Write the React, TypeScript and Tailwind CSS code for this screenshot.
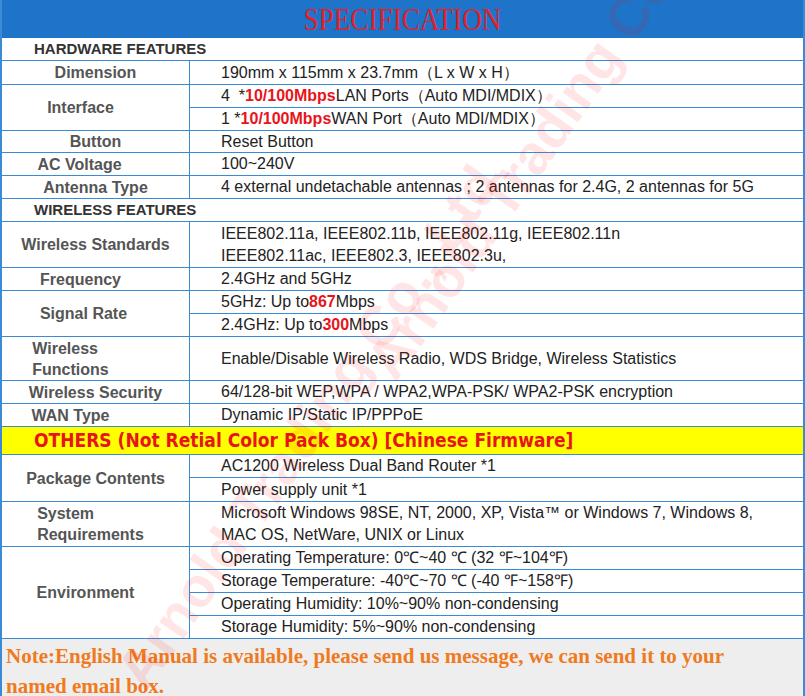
import React from "react";

const B = "border-[#3b8ad6]";
const R = ({ children }: { children: React.ReactNode }) => <span className="text-[#e8141b] font-bold">{children}</span>;

function Row({ label, lines, h, dividers = true }: { label: React.ReactNode; lines: React.ReactNode[]; h: number[]; dividers?: boolean }) {
  return (
    <div className={`flex border-b ${B}`}>
      <div className={`w-[188px] shrink-0 border-r ${B} flex items-center justify-center text-[16px] font-bold text-[#555] leading-[21px]`}>{label}</div>
      <div className="flex-1 flex flex-col">
        {lines.map((l, i) => (
          <div key={i} style={{ height: i === lines.length - 1 ? h[i] - 1 : h[i] }} className={`flex items-center pl-[31px] text-[16px] text-[#222] whitespace-nowrap ${dividers && i < lines.length - 1 ? `border-b ${B}` : ""}`}>{l}</div>
        ))}
      </div>
    </div>
  );
}

function Section({ t }: { t: string }) {
  return <div className={`h-[23px] border-b ${B} pl-[32px] flex items-center text-[15px] font-bold text-[#333]`}>{t}</div>;
}

export default function App() {
  return (
    <div className="relative w-[805px] h-[696px] bg-white overflow-hidden" style={{ fontFamily: '"Liberation Sans", Arial, sans-serif' }}>
      <div className={`h-[696px] border-l-2 border-r-2 ${B} flex flex-col`}>
        <div className="h-[38px] shrink-0 bg-[#1e74c8] flex items-center justify-center">
          <span className="text-[#e0202a] text-[32px] inline-block scale-x-[0.85]" style={{ fontFamily: '"Liberation Serif", serif' }}>SPECIFICATION</span>
        </div>
        <Section t="HARDWARE FEATURES" />
        <Row label="Dimension" lines={["190mm x 115mm x 23.7mm（L x W x H）"]} h={[24]} />
        <Row label={<span className="-ml-[30px]">Interface</span>} lines={[<>4&nbsp; *{" "}<R>10/100Mbps</R>{" "}LAN Ports（Auto MDI/MDIX）</>, <>1 *{" "}<R>10/100Mbps</R>{" "}WAN Port（Auto MDI/MDIX）</>]} h={[23, 23]} />
        <Row label="Button" lines={["Reset Button"]} h={[22]} />
        <Row label={<span className="-ml-[32px]">AC Voltage</span>} lines={["100~240V"]} h={[23]} />
        <Row label="Antenna Type" lines={["4 external undetachable antennas ; 2 antennas for 2.4G, 2 antennas for 5G"]} h={[23]} />
        <Section t="WIRELESS FEATURES" />
        <Row label="Wireless Standards" lines={["IEEE802.11a, IEEE802.11b, IEEE802.11g, IEEE802.11n", "IEEE802.11ac, IEEE802.3, IEEE802.3u,"]} h={[23, 23]} dividers={false} />
        <Row label={<span className="-ml-[30px]">Frequency</span>} lines={["2.4GHz and 5GHz"]} h={[23]} />
        <Row label={<span className="-ml-[24px]">Signal Rate</span>} lines={[<>5GHz: Up to{" "}<R>867</R>Mbps</>, <>2.4GHz: Up to{" "}<R>300</R>Mbps</>]} h={[23, 23]} />
        <Row label={<span className="-ml-[50px]">Wireless<br />Functions</span>} lines={["Enable/Disable Wireless Radio, WDS Bridge, Wireless Statistics"]} h={[44]} />
        <Row label="Wireless Security" lines={["64/128-bit WEP,WPA / WPA2,WPA-PSK/ WPA2-PSK encryption"]} h={[23]} />
        <Row label={<span className="-ml-[50px]">WAN Type</span>} lines={["Dynamic IP/Static IP/PPPoE"]} h={[23]} />
        <div className={`h-[28px] shrink-0 bg-[#ffff00] border-b ${B} pl-[32px] flex items-center text-[19px] font-bold text-[#e8141b]`} style={{ fontFamily: '"DejaVu Sans Condensed", "Liberation Sans", sans-serif' }}>OTHERS (Not Retial Color Pack Box) [Chinese Firmware]</div>
        <Row label="Package Contents" lines={["AC1200 Wireless Dual Band Router *1", "Power supply unit *1"]} h={[23, 24]} />
        <Row label={<span className="-ml-[10px]">System<br />Requirements</span>} lines={["Microsoft Windows 98SE, NT, 2000, XP, Vista™ or Windows 7, Windows 8,", "MAC OS, NetWare, UNIX or Linux"]} h={[22, 23]} dividers={false} />
        <Row label={<span className="-ml-[20px]">Environment</span>} lines={["Operating Temperature: 0℃~40 ℃ (32 ℉~104℉)", "Storage Temperature: -40℃~70 ℃ (-40 ℉~158℉)", "Operating Humidity: 10%~90% non-condensing", "Storage Humidity: 5%~90% non-condensing"]} h={[23, 23, 23, 23]} />
        <div className={`flex-1 bg-[#eeeeee] border-b-2 ${B} pl-[4px] pr-[30px] pt-[2px] text-[21px] font-bold text-[#f07a1e] leading-[30px]`} style={{ fontFamily: '"Liberation Serif", serif' }}>
          Note:English Manual is available, please send us message, we can send it to your named email box.
        </div>
      </div>
      <div className="pointer-events-none absolute inset-0">
        <div className="absolute left-[380px] top-[330px] -rotate-[55deg] text-[56px] font-bold text-[#ff0000]/10 whitespace-nowrap origin-left">Arnold Trading Co., Ltd.</div>
        <div className="absolute left-[130px] top-[640px] -rotate-[55deg] text-[56px] font-bold text-[#ff0000]/10 whitespace-nowrap origin-left">Arnold Trading Co., Ltd.</div>
      </div>
    </div>
  );
}
